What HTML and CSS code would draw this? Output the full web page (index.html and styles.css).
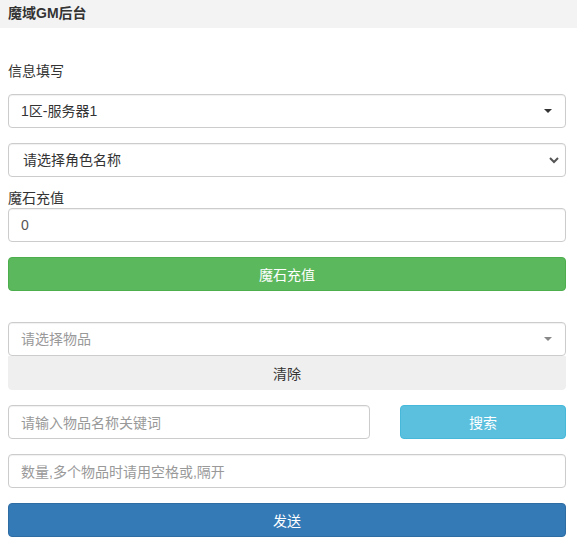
FILE: index.html
```html
<!DOCTYPE html>
<html lang="zh">
<head>
<meta charset="utf-8">
<title>魔域GM后台</title>
<link rel="stylesheet" href="styles.css">
</head>
<body>
<header class="topbar"><span class="brand">魔域GM后台</span></header>
<main class="page">
  <div class="section-label">信息填写</div>
  <div class="field picker">
    <span class="picker-text">1区-服务器1</span>
    <span class="caret"></span>
  </div>
  <div class="field picker native">
    <span class="picker-text">请选择角色名称</span>
    <svg class="chevron" width="10" height="8" viewBox="0 0 10 8"><path d="M1 2 L5 6 L9 2" fill="none" stroke="#555" stroke-width="2"/></svg>
  </div>
  <div class="field-label">魔石充值</div>
  <div class="field input"><span class="value">0</span></div>
  <button class="btn btn-success gap">魔石充值</button>

  <div class="item-group">
    <div class="field picker">
      <span class="picker-text placeholder">请选择物品</span>
      <span class="caret light"></span>
    </div>
    <button class="btn btn-clear">清除</button>
  </div>

  <div class="search-row">
    <div class="field input"><span class="placeholder">请输入物品名称关键词</span></div>
    <button class="btn btn-info">搜索</button>
  </div>
  <div class="field input gap"><span class="placeholder">数量,多个物品时请用空格或,隔开</span></div>
  <button class="btn btn-primary gap">发送</button>
</main>
</body>
</html>
```
FILE: styles.css
```css
* { box-sizing: border-box; }
html, body { margin: 0; padding: 0; background: #fff; }
body {
  font-family: "Liberation Sans", "Noto Sans CJK SC", sans-serif;
  font-size: 14px;
  color: #333;
}
.topbar {
  height: 28px;
  background: #f3f3f3;
  padding-left: 8px;
  line-height: 27px;
}
.brand { font-weight: bold; font-size: 14px; color: #333; }
.page {
  padding: 0 11px 0 8px;
  display: flex;
  flex-direction: column;
}
.section-label {
  margin-top: 33px;
  height: 20px;
  line-height: 20px;
  margin-bottom: 13px;
}
.field {
  height: 34px;
  border: 1px solid #ccc;
  border-radius: 4px;
  background: #fff;
  display: flex;
  align-items: center;
  padding: 0 12px;
  box-shadow: inset 0 1px 1px rgba(0,0,0,.06);
}
.picker { justify-content: space-between; padding-right: 12px; }
.picker + .picker { margin-top: 15px; }
.native { padding-left: 14px; }
.picker-text { line-height: 20px; }
.caret {
  width: 0; height: 0;
  border-left: 4px solid transparent;
  border-right: 4px solid transparent;
  border-top: 4px solid #333;
  margin-right: 1px;
}
.caret.light { border-top-color: #888; }
.chevron { margin-right: -6px; }
.placeholder { color: #999; }
.field-label {
  margin-top: 11px;
  height: 20px;
  line-height: 20px;
}
.input .value { color: #555; }
.btn {
  height: 34px;
  border: 1px solid transparent;
  border-radius: 4px;
  font-family: inherit;
  font-size: 14px;
  color: #fff;
  padding: 0;
  width: 100%;
}
.gap { margin-top: 15px; }
.btn-success { background: #5cb85c; border-color: #4cae4c; }
.btn-info { background: #5bc0de; border-color: #46b8da; }
.btn-primary { background: #337ab7; border-color: #2e6da4; }
.item-group { margin-top: 31px; display: flex; flex-direction: column; }
.item-group .picker { margin-bottom: 0; }
.btn-clear {
  background: #efefef;
  border-color: #efefef;
  color: #333;
  border-radius: 0 0 4px 4px;
  margin-top: 0;
}
.search-row {
  margin-top: 15px;
  display: grid;
  grid-template-columns: 362px 166px;
  justify-content: space-between;
}
```
